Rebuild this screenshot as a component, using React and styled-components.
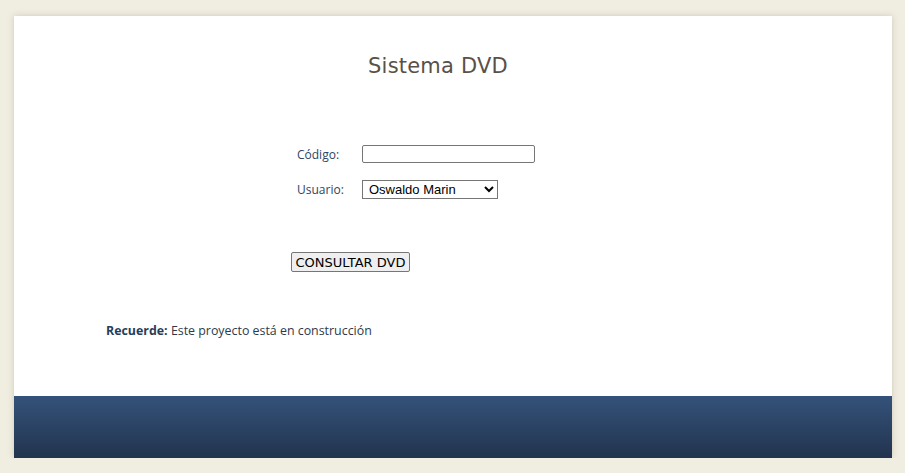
import React from 'react'
import styled, { createGlobalStyle } from 'styled-components'

const GlobalStyle = createGlobalStyle`
  body {
    margin: 0;
    background: #f0ede1;
    font-family: "Open Sans", "Noto Sans", sans-serif;
  }
`

const Page = styled.div`
  width: 878px;
  margin: 16px 0 0 14px;
  box-shadow: 0 0 6px rgba(150, 140, 110, 0.35);
`

const Main = styled.main`
  background: #fff;
  height: 380px;
  display: flex;
  flex-direction: column;
`

const Title = styled.h1`
  margin: 38px 0 0 0;
  padding-right: 30px;
  text-align: center;
  font-family: "URW Gothic", "Century Gothic", "DejaVu Sans", sans-serif;
  font-weight: normal;
  font-size: 21px;
  color: #5a5048;
  letter-spacing: 0.2px;
`

const Form = styled.form`
  margin: 67px 0 0 277px;
  display: flex;
  flex-direction: column;
`

const Row = styled.div`
  display: flex;
  align-items: center;
  height: 18px;
  margin-bottom: ${p => p.gap || 0}px;
`

const Label = styled.label`
  width: 65px;
  padding-left: 6px;
  font-size: 12px;
  color: #2c4564;
`

const TextInput = styled.input`
  box-sizing: border-box;
  width: 173px;
  height: 18px;
  border: 1px solid #767676;
  border-radius: 2px;
  padding: 1px 2px;
  font: 13px "Liberation Sans", Arial, sans-serif;
`

const Select = styled.select`
  box-sizing: border-box;
  width: 136px;
  height: 19px;
  border: 1px solid #767676;
  border-radius: 0;
  padding: 0 2px;
  background: #fff;
  color: #000;
  font: 13px "Liberation Sans", Arial, sans-serif;
`

const Button = styled.button`
  align-self: flex-start;
  margin-top: 54px;
  box-sizing: border-box;
  width: 119px;
  height: 20px;
  padding: 0;
  border: 1px solid #767676;
  border-radius: 2px;
  background: #efefef;
  color: #000;
  font: 13px "DejaVu Sans", Verdana, sans-serif;
`

const Note = styled.p`
  margin: 50px 0 0 92px;
  font-size: 12.4px;
  color: #2c3a4c;

  strong {
    color: #283d58;
  }
`

const Footer = styled.footer`
  height: 62px;
  background: linear-gradient(#34527a, #22344e);
`

export default function App() {
  return (
    <>
      <GlobalStyle />
      <Page>
        <Main>
          <Title>Sistema DVD</Title>
          <Form onSubmit={e => e.preventDefault()}>
            <Row gap={17}>
              <Label htmlFor="codigo">Código:</Label>
              <TextInput id="codigo" type="text" />
            </Row>
            <Row>
              <Label htmlFor="usuario">Usuario:</Label>
              <Select id="usuario" defaultValue="om">
                <option value="om">Oswaldo Marin</option>
              </Select>
            </Row>
            <Button type="submit">CONSULTAR DVD</Button>
          </Form>
          <Note><strong>Recuerde:</strong> Este proyecto está en construcción</Note>
        </Main>
        <Footer />
      </Page>
    </>
  )
}
